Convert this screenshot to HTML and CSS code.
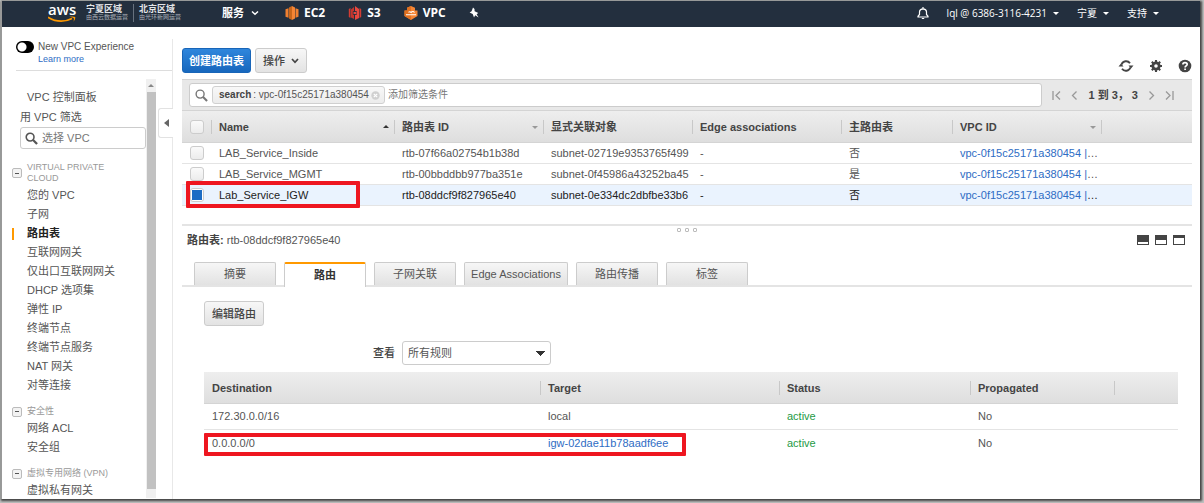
FILE: index.html
```html
<!DOCTYPE html>
<html lang="zh-CN">
<head>
<meta charset="utf-8">
<meta name="viewport" content="width=device-width, initial-scale=1">
<title>VPC 路由表</title>
<link rel="stylesheet" href="styles.css">
</head>
<body>
<div class="window">
  <header class="topbar">
    <a class="logo" href="#" aria-label="aws">
      <span class="logo-word">aws</span>
      <svg class="logo-smile" viewBox="0 0 28 7" aria-hidden="true"><path d="M0 1.2Q12 8.5 24 2.4" fill="none" stroke="#f90" stroke-width="1.7"/><path d="M21 .8Q25 0 27.300 1Q27.600 3.500 25.600 5.800Q26.200 3 25.700 2Q24 1.300 21 .8Z" fill="#f90"/></svg>
    </a>
    <div class="regions">
      <div class="region"><b>宁夏区域</b><small>由西云数据运营</small></div>
      <div class="region"><b>北京区域</b><small>由光环新网运营</small></div>
    </div>
    <nav class="services">
      <button class="nav-btn nav-services">服务 <svg class="chev" viewBox="0 0 8 6"><path d="M1 1.500 4 4.300 7 1.500" fill="none" stroke="#fff" stroke-width="1.500"/></svg></button>
      <a class="nav-link" href="#"><svg class="svc" viewBox="0 0 14 14"><path d="M4 1.500 7 0v14l-3-1.500z" fill="#c9661a"/><path d="M7 0l3 1.500v11L7 14z" fill="#f58534"/><path d="M.5 3.200 3.500 2.300v9.400L.5 10.800zM10.500 2.300l3 .9v7.600l-3 .9z" fill="#f08030"/></svg>EC2</a>
      <a class="nav-link" href="#"><svg class="svc" viewBox="0 0 14 14"><path d="M.8 3 2.500 2v10L.8 11zM13.200 3l-1.700-1v10l1.700-1z" fill="#d23c33"/><path d="M3 3.500 6 1v4L4.800 5.400v3.200L6 9v4L3 11.500z" fill="#c4352d"/><path d="M11 3 7 0v5l2 .4v3.200L7 9v5l4-2z" fill="#e8483f"/><path d="M5.500 6h3v2h-3z" fill="#e8483f"/></svg>S3</a>
      <a class="nav-link" href="#"><svg class="svc" viewBox="0 0 14 14"><path d="M3 1.800 7 0l4 1.800v2.700h2.500V10L7 14 .5 10V4.500H3z" fill="#f58534"/><path d="M7 0 3 1.800v2.700H.5V10L7 14z" fill="#e0701f"/><path d="M2 8.800h10M4.500 6.300Q6 5 7 6.500Q9 4.500 10.500 6.500" fill="none" stroke="#fff" stroke-width="1.100"/></svg>VPC</a>
      <button class="nav-btn" aria-label="固定"><svg class="pin" viewBox="0 0 10 12"><path d="M4 .5 5.500 2 5.600 4.200 9.300 6 7.600 7.200 9.600 10.500 6.200 8.300 5 10.600 3.700 7 .6 5.500 2.600 4.200z" fill="#fff"/></svg></button>
    </nav>
    <nav class="account">
      <button class="nav-btn" aria-label="通知"><svg class="bell" viewBox="0 0 12 13"><path d="M1 10V9.300L2.500 7.500V4.800Q2.700 2 6 1.800Q9.300 2 9.500 4.800V7.500L11 9.300V10zM6 0v2M4.800 11.500h2.400" fill="none" stroke="#fff" stroke-width="1.200"/></svg></button>
      <button class="nav-btn">lql @ 6386-3116-4231 <i class="caret"></i></button>
      <button class="nav-btn">宁夏 <i class="caret"></i></button>
      <button class="nav-btn">支持 <i class="caret"></i></button>
    </nav>
  </header>

  <div class="layout">
    <aside class="sidebar">
      <div class="experience">
        <input class="switch" type="checkbox" role="switch" id="exp">
        <div><label for="exp">New VPC Experience</label><a href="#">Learn more</a></div>
      </div>
      <div class="menu-area">
        <div class="menu">
          <a class="dashboard" href="#">VPC 控制面板</a>
          <label class="filter-label" for="vpcfilter">用 VPC 筛选</label>
          <div class="vpc-filter">
            <svg class="mag" viewBox="0 0 14 14"><circle cx="5.500" cy="5.500" r="4.200" fill="none" stroke="#555" stroke-width="1.700"/><path d="M8.700 8.700 13 13" stroke="#555" stroke-width="2.400"/></svg>
            <input id="vpcfilter" type="text" placeholder="选择 VPC">
          </div>
          <h2 class="group first"><button class="fold" aria-label="折叠"></button><span>VIRTUAL PRIVATE CLOUD</span></h2>
          <ul>
            <li><a href="#">您的 VPC</a></li><li><a href="#">子网</a></li><li class="current"><a href="#">路由表</a></li><li><a href="#">互联网网关</a></li><li><a href="#">仅出口互联网网关</a></li><li><a href="#">DHCP 选项集</a></li><li><a href="#">弹性 IP</a></li><li><a href="#">终端节点</a></li><li><a href="#">终端节点服务</a></li><li><a href="#">NAT 网关</a></li><li><a href="#">对等连接</a></li>
          </ul>
          <h2 class="group"><button class="fold" aria-label="折叠"></button><span>安全性</span></h2>
          <ul><li><a href="#">网络 ACL</a></li><li><a href="#">安全组</a></li></ul>
          <h2 class="group"><button class="fold" aria-label="折叠"></button><span>虚拟专用网络 (VPN)</span></h2>
          <ul><li><a href="#">虚拟私有网关</a></li></ul>
        </div>
        <div class="scrollbar"><i class="scroll-up"></i><i class="thumb"></i></div>
      </div>
      <button class="collapse" aria-label="收起"><svg viewBox="0 0 5 8"><path d="M5 0v8L0 4z" fill="#666"/></svg></button>
    </aside>

    <main class="content">
      <div class="actions">
        <button class="btn primary">创建路由表</button>
        <button class="btn">操作 <svg class="chev" viewBox="0 0 8 6"><path d="M1 1 4 4.300 7 1" fill="none" stroke="#444" stroke-width="1.700"/></svg></button>
        <div class="tools">
          <button class="icon-btn" aria-label="刷新"><svg class="refresh" viewBox="0 0 16 14"><path d="M3.600 5.500A4.800 4.800 0 0 1 12 4.200M12.400 8.500A4.800 4.800 0 0 1 4 9.800" fill="none" stroke="#444" stroke-width="1.900"/><path d="M10.500 6.500h5L13 9.600zM.5 7.500h5L3 4.400z" fill="#444"/></svg></button>
          <button class="icon-btn" aria-label="设置"><svg viewBox="0 0 14 14"><circle cx="7" cy="7" r="3.200" fill="none" stroke="#444" stroke-width="2.800"/><path d="M7 1v2.500M7 10.500V13M1 7h2.500M10.500 7H13M2.800 2.800l1.600 1.600M9.600 9.600l1.600 1.600M11.200 2.800 9.600 4.400M4.400 9.600l-1.600 1.600" stroke="#444" stroke-width="2.100"/></svg></button>
          <button class="icon-btn" aria-label="帮助"><svg viewBox="0 0 14 14"><circle cx="7" cy="7" r="6.300" fill="#444"/><path d="M4.900 5.600Q4.900 3.600 7 3.600Q9.200 3.600 9.200 5.300Q9.200 6.300 8 7Q7.100 7.500 7.100 8.400M7.100 9.500v1.500" fill="none" stroke="#fff" stroke-width="1.700"/></svg></button>
        </div>
      </div>

      <div class="searchbar">
        <div class="search-box">
          <svg class="mag" viewBox="0 0 14 14"><circle cx="5.500" cy="5.500" r="4.300" fill="none" stroke="#777" stroke-width="1.500"/><path d="M8.700 8.700 13 13" stroke="#777" stroke-width="2.200"/></svg>
          <span class="chip"><b>search</b> : vpc-0f15c25171a380454 <button class="chip-x" aria-label="清除"><svg viewBox="0 0 9 9"><circle cx="4.500" cy="4.500" r="4.200" fill="#d0d0d0"/><path d="M2.800 2.800l3.400 3.400M6.200 2.800 2.800 6.200" stroke="#fff" stroke-width="1.200"/></svg></button></span>
          <input class="search-input" type="text" aria-label="筛选" placeholder="添加筛选条件">
        </div>
        <div class="pager">
          <button aria-label="首页"><svg viewBox="0 0 9 9"><path d="M1 0v9M8 .5 4 4.500l4 4" /></svg></button>
          <button aria-label="上一页"><svg viewBox="0 0 9 9"><path d="M6.500.5l-4 4 4 4"/></svg></button>
          <b>1 到 3， 3</b>
          <button aria-label="下一页"><svg viewBox="0 0 9 9"><path d="M2.500.5l4 4-4 4"/></svg></button>
          <button aria-label="末页"><svg viewBox="0 0 9 9"><path d="M8 0v9M1 .5l4 4-4 4"/></svg></button>
        </div>
      </div>

      <div class="table-wrap">
        <table class="grid routes-list">
          <colgroup><col class="c-check"><col class="c-name"><col class="c-id"><col class="c-id"><col class="c-id"><col class="c-main"><col class="c-id"><col></colgroup>
          <thead><tr>
            <th><input type="checkbox" aria-label="全选"></th>
            <th>Name<i class="sort up"></i></th><th>路由表 ID<i class="sort"></i></th><th>显式关联对象</th><th>Edge associations</th><th>主路由表</th><th>VPC ID<i class="sort"></i></th><th></th>
          </tr></thead>
          <tbody>
            <tr><td><input type="checkbox" aria-label="LAB_Service_Inside"></td><td>LAB_Service_Inside</td><td>rtb-07f66a02754b1b38d</td><td>subnet-02719e9353765f499</td><td>-</td><td>否</td><td><a href="#">vpc-0f15c25171a380454 |</a>…</td><td></td></tr>
            <tr><td><input type="checkbox" aria-label="LAB_Service_MGMT"></td><td>LAB_Service_MGMT</td><td>rtb-00bbddbb977ba351e</td><td>subnet-0f45986a43252ba45</td><td>-</td><td>是</td><td><a href="#">vpc-0f15c25171a380454 |</a>…</td><td></td></tr>
            <tr class="selected"><td><input type="checkbox" checked aria-label="Lab_Service_IGW"></td><td>Lab_Service_IGW</td><td>rtb-08ddcf9f827965e40</td><td>subnet-0e334dc2dbfbe33b6</td><td>-</td><td>否</td><td><a href="#">vpc-0f15c25171a380454 |</a>…</td><td></td></tr>
          </tbody>
        </table>
        <div class="mark mark-name"></div>
      </div>

      <div class="splitter"><i></i><i></i><i></i></div>

      <section class="detail">
        <div class="detail-head">
          <p><b>路由表:</b> rtb-08ddcf9f827965e40</p>
          <div class="panes">
            <button class="pane low" aria-label="最小化"></button><button class="pane mid" aria-label="拆分"></button><button class="pane high" aria-label="最大化"></button>
          </div>
        </div>
        <div class="tabs" role="tablist">
          <button class="tab" role="tab">摘要</button>
          <button class="tab active" role="tab" aria-selected="true">路由</button>
          <button class="tab" role="tab">子网关联</button>
          <button class="tab wide" role="tab">Edge Associations</button>
          <button class="tab" role="tab">路由传播</button>
          <button class="tab" role="tab">标签</button>
        </div>
        <div class="tab-body">
          <button class="btn">编辑路由</button>
          <div class="view-row">
            <label for="view">查看</label>
            <select id="view"><option>所有规则</option></select>
          </div>
          <div class="table-wrap">
            <table class="grid rules">
              <colgroup><col class="r-dest"><col class="r-target"><col class="r-status"><col class="r-prop"><col></colgroup>
              <thead><tr><th>Destination</th><th>Target</th><th>Status</th><th>Propagated</th><th></th></tr></thead>
              <tbody>
                <tr><td>172.30.0.0/16</td><td>local</td><td class="ok">active</td><td>No</td><td></td></tr>
                <tr><td>0.0.0.0/0</td><td><a href="#">igw-02dae11b78aadf6ee</a></td><td class="ok">active</td><td>No</td><td></td></tr>
              </tbody>
            </table>
            <div class="mark mark-route"></div>
          </div>
        </div>
      </section>
    </main>
  </div>
</div>
</body>
</html>
```
FILE: styles.css
```css
* { box-sizing: border-box; }

body {
  margin: 0;
  height: 100vh;
  padding: 1px 4px 4px 1px;
  display: flex;
  background: #bfc1c0;
  color: #555;
  font: 11px/16px "Liberation Sans", "Noto Sans CJK SC", sans-serif;
}

button, input, select { font: inherit; color: inherit; }
button { padding: 0; border: 0; background: none; display: flex; align-items: center; }
a { color: #2e6cc4; text-decoration: none; }
svg { display: block; flex: none; }

.window {
  flex: 1;
  min-width: 0;
  display: flex;
  flex-direction: column;
  background: #fff;
  border-left: 1px solid #999;
  box-shadow: 1px 1px 2px 1px #444;
}

/* top bar */
.topbar {
  height: 26px;
  flex: none;
  display: flex;
  align-items: center;
  background: #232f3e;
  color: #fff;
  padding: 0 41px 2px 46px;
  font-family: "Open Sans", "Noto Sans CJK SC", sans-serif;
}
.logo { width: 28px; color: #fff; }
.logo-word { display: block; font-size: 15px; font-weight: 600; line-height: 13px; text-align: center; }
.logo-smile { width: 28px; height: 7px; }
.regions { display: flex; margin-left: 10px; }
.region { line-height: 9px; width: 52px; }
.region + .region { border-left: 1px solid #67717e; padding-left: 5px; margin-left: -5px; }
.region:first-child { padding-right: 5px; }
.region b { display: block; font-size: 9px; white-space: nowrap; color: #e3e5e8; }
.region small { display: block; font-size: 6px; white-space: nowrap; color: #aab0b8; }
.services { display: flex; align-items: center; margin-left: 37px; gap: 23px; font-weight: 700; }
.nav-services { gap: 7px; margin-right: 3px; }
.chev { width: 8px; height: 6px; }
.nav-link { color: #fff; display: flex; align-items: center; gap: 5px; font-size: 12px; }
.svc { width: 14px; height: 14px; }
.pin { width: 10px; height: 12px; }
.account { margin-left: auto; display: flex; gap: 18px; font-size: 10px; }
.account .nav-btn { gap: 6px; }
.bell { width: 12px; height: 13px; }
.caret { border: 3px solid transparent; border-top-color: #fff; border-bottom: 0; }

.layout { flex: 1; min-height: 0; display: grid; grid-template-columns: 171px 1fr; }

/* sidebar */
.sidebar {
  position: relative;
  margin-top: 12px;
  border-right: 1px solid #e8e8e8;
  min-height: 0;
  display: flex;
  flex-direction: column;
}
.experience {
  display: flex;
  gap: 4px;
  height: 32px;
  margin-left: 14px;
  border-bottom: 1px solid #ddd;
  line-height: 13px;
}
.experience label { display: block; font-size: 10px; white-space: nowrap; padding-top: 1px; }
.experience a { display: block; font-size: 9px; line-height: 13px; }
.switch {
  appearance: none;
  width: 18px;
  height: 12px;
  margin: 2px 0 0;
  border-radius: 6px;
  background: radial-gradient(circle at 6px 6px, #fff 4px, #000 5px);
}
.menu-area { flex: 1; min-height: 0; display: flex; margin: 8px 16px 1px 0; }
.menu { flex: 1; overflow: hidden; padding: 8px 0 0 10px; }
.dashboard { display: block; margin-left: 15px; line-height: 20px; color: #555; }
.filter-label { display: block; margin-left: 8px; line-height: 20px; }
.vpc-filter {
  display: flex;
  align-items: center;
  height: 22px;
  margin: 0 0 0 8px;
  padding: 0 4px;
  border: 1px solid #ccc;
  border-radius: 3px;
}
.mag { width: 13px; height: 13px; }
.vpc-filter input { min-width: 0; width: 100%; border: 0; outline: 0; padding: 0 4px; background: none; }
::placeholder { color: #777; opacity: 1; }
.group {
  display: flex;
  align-items: center;
  gap: 5px;
  margin: 11px 0 0;
  padding-right: 30px;
  font-size: 9px;
  line-height: 11px;
  font-weight: 400;
  color: #999;
}
.group.first { margin-top: 13px; }
.fold {
  width: 10px;
  height: 10px;
  flex: none;
  border: 1px solid #bbb;
  border-radius: 2px;
  background: linear-gradient(#555, #555) center / 4px 1px no-repeat #f3f3f3;
}
.menu ul { list-style: none; margin: 2px 0 0; padding: 0; }
.menu li { line-height: 19px; padding-left: 15px; height: 19px; white-space: nowrap; }
.menu li a { color: #555; }
.menu .current { background: linear-gradient(#f90, #f90) 0 center / 2px 12px no-repeat; }
.menu .current a { color: #222; font-weight: 700; }
.scrollbar { width: 10px; background: #f0f0f0; display: flex; flex-direction: column; align-items: center; padding-bottom: 9px; }
.scroll-up { border: 3px solid transparent; border-bottom-color: #888; border-top: 0; margin: 5px 0; }
.thumb { width: 9px; flex: 1; background: #c1c1c1; }
.collapse {
  position: absolute;
  top: 69px;
  right: -1px;
  width: 15px;
  height: 30px;
  justify-content: center;
  background: #fff;
  border: 1px solid #e2e2e2;
  border-right: 0;
  border-radius: 3px 0 0 3px;
}
.collapse svg { width: 5px; height: 8px; }

/* content */
.content { min-width: 0; padding: 21px 8px 0 9px; }
.actions { display: flex; gap: 4px; margin-bottom: 6px; }
.btn {
  height: 25px;
  padding: 0 7px;
  gap: 6px;
  border: 1px solid #ccc;
  border-radius: 3px;
  background: linear-gradient(#f7f7f7, #e3e3e3);
  color: #444;
  font-weight: 500;
}
.primary { background: linear-gradient(#2f86dc, #1767bd); border-color: #1865b8; color: #fff; font-weight: 700; padding: 0 6px; }
.tools { margin-left: auto; display: flex; align-items: flex-end; gap: 15px; }
.icon-btn svg { width: 14px; height: 14px; }
.icon-btn .refresh { width: 16px; }

.searchbar {
  display: flex;
  align-items: center;
  height: 32px;
  padding: 0 18px 0 7px;
  border-top: 1px solid #d4d4d4;
  border-bottom: 1px solid #d4d4d4;
  background: #e8e8e8;
}
.search-box {
  flex: 1;
  display: flex;
  align-items: center;
  height: 24px;
  padding: 0 5px;
  background: #fff;
  border: 1px solid #ccc;
  border-radius: 3px;
}
.chip {
  display: flex;
  align-items: center;
  gap: 2px;
  height: 18px;
  margin-left: 4px;
  padding: 0 4px 0 6px;
  border: 1px solid #d0d0d0;
  border-radius: 3px;
  background: linear-gradient(#f8f8f8, #ececec);
  white-space: nowrap;
  font-size: 10px;
}
.chip b { color: #444; }
.chip-x svg { width: 9px; height: 9px; }
.search-input { flex: 1; min-width: 0; border: 0; outline: 0; padding: 0 3px; font-size: 10px; }
.pager { display: flex; align-items: center; gap: 9px; margin-left: 10px; color: #444; white-space: nowrap; }
.pager svg { width: 9px; height: 9px; fill: none; stroke: #999; stroke-width: 1.3; }

.grid { width: 100%; table-layout: fixed; border-collapse: separate; border-spacing: 0; }
.grid th, .grid td { padding: 0 0 0 8px; text-align: left; white-space: nowrap; }
.grid th {
  position: relative;
  height: 32px;
  color: #444;
  background: linear-gradient(#eee, #dedede);
  border-bottom: 1px solid #d4d4d4;
}
.grid th + th::before { content: ""; position: absolute; left: 0; top: 9px; height: 14px; border-left: 1px solid #c8c8c8; }
.grid td { height: 21px; border-bottom: 1px solid #e4e4e4; line-height: 20px; }
.c-check { width: 29px; }
.c-name { width: 183px; }
.c-id { width: 149px; }
.c-main { width: 111px; }
.routes-list input {
  appearance: none;
  display: block;
  width: 14px;
  height: 14px;
  margin: 0;
  border: 1px solid #ccc;
  border-radius: 3px;
  background: linear-gradient(#fafafa, #ececec);
}
.routes-list input:checked { border-color: #ccc; background: linear-gradient(#1c6cc4, #1c6cc4) center / 10px 10px no-repeat #fff; }
.selected td { background: #eaf3fe; color: #222; }
.sort { position: absolute; right: 5px; top: 15px; border: 3px solid transparent; border-top-color: #999; border-bottom: 0; }
.sort.up { border-top: 0; border-bottom: 3px solid #333; top: 14px; }

.table-wrap { position: relative; }
.mark { position: absolute; border: 4px solid #ee1620; border-radius: 1px; pointer-events: none; }
.mark-name { left: 4px; bottom: -2px; width: 174px; height: 27px; }
.mark-route { left: 0; bottom: 0; width: 482px; height: 23px; }

.splitter { display: flex; justify-content: center; gap: 4px; margin-top: 18px; padding-top: 2px; border-top: 2px solid #e4e4e4; }
.splitter i { width: 4px; height: 4px; border: 1px solid #bbb; border-radius: 1px; }

.detail-head { display: flex; align-items: center; justify-content: space-between; padding: 0 7px 0 5px; height: 16px; }
.detail-head p { margin: 0; }
.detail-head b { color: #444; }
.panes { display: flex; gap: 6px; }
.pane { width: 12px; height: 10px; border: 1px solid #444; background: #fff; }
.low { border-top-width: 7px; }
.mid { border-top-width: 5px; }
.high { border-top-width: 3px; }
.tabs { display: flex; gap: 8px; margin-top: 14px; padding-left: 12px; border-bottom: 2px solid #e4e4e4; }
.tab {
  justify-content: center;
  width: 82px;
  height: 23px;
  border: 1px solid #ccc;
  border-bottom: 0;
  border-radius: 2px 2px 0 0;
  background: linear-gradient(#f6f6f6, #e2e2e2);
  white-space: nowrap;
}
.tab.wide { width: 104px; }
.tab.active { height: 25px; margin-bottom: -2px; padding-bottom: 2px; border-top: 2px solid #f90; background: #fff; color: #333; font-weight: 700; }
.tab-body { padding: 14px 14px 0 22px; }
.view-row { display: flex; align-items: center; gap: 7px; margin: 15px 0 7px 169px; }
.view-row label { font-weight: 500; color: #444; }
.view-row select {
  appearance: none;
  width: 149px;
  height: 24px;
  padding: 0 5px;
  border: 1px solid #ccc;
  border-radius: 3px;
  background:
    linear-gradient(to bottom right, #333 50%, transparent 50%) 137px 9px / 5px 5px no-repeat,
    linear-gradient(to bottom left, #333 50%, transparent 50%) 132px 9px / 5px 5px no-repeat,
    #fff;
}
.rules td { height: 26px; line-height: 25px; }
.rules tbody tr:last-child td { border-bottom: 0; }
.r-dest { width: 336px; }
.r-target { width: 239px; }
.r-status { width: 191px; }
.r-prop { width: 144px; }
.rules .ok { color: #1e9a45; }
```
